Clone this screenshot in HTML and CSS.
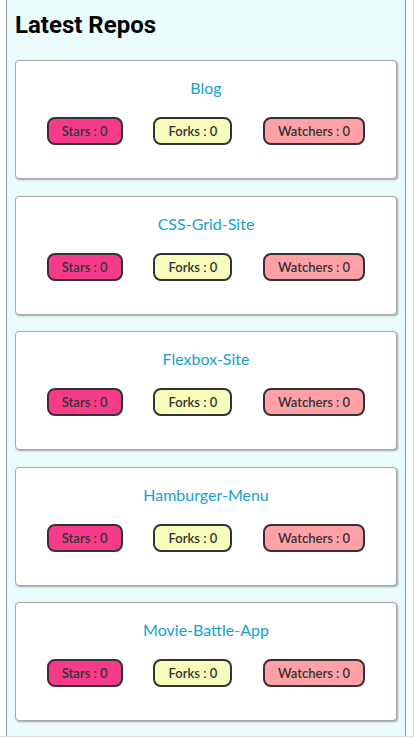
FILE: index.html
```html
<!DOCTYPE html>
<html>
<head>
<meta charset="utf-8">
<link rel="stylesheet" href="styles.css">
</head>
<body>
<div class="frame">
  <section class="repos">
    <h2 class="repos-title">Latest Repos</h2>
    <div class="card">
      <a class="card-name">Blog</a>
      <div class="stats">
        <span class="badge stars">Stars : 0</span>
        <span class="badge forks">Forks : 0</span>
        <span class="badge watchers">Watchers : 0</span>
      </div>
    </div>
    <div class="card">
      <a class="card-name">CSS-Grid-Site</a>
      <div class="stats">
        <span class="badge stars">Stars : 0</span>
        <span class="badge forks">Forks : 0</span>
        <span class="badge watchers">Watchers : 0</span>
      </div>
    </div>
    <div class="card">
      <a class="card-name">Flexbox-Site</a>
      <div class="stats">
        <span class="badge stars">Stars : 0</span>
        <span class="badge forks">Forks : 0</span>
        <span class="badge watchers">Watchers : 0</span>
      </div>
    </div>
    <div class="card">
      <a class="card-name">Hamburger-Menu</a>
      <div class="stats">
        <span class="badge stars">Stars : 0</span>
        <span class="badge forks">Forks : 0</span>
        <span class="badge watchers">Watchers : 0</span>
      </div>
    </div>
    <div class="card">
      <a class="card-name">Movie-Battle-App</a>
      <div class="stats">
        <span class="badge stars">Stars : 0</span>
        <span class="badge forks">Forks : 0</span>
        <span class="badge watchers">Watchers : 0</span>
      </div>
    </div>
  </section>
</div>
</body>
</html>
```
FILE: styles.css
```css
html, body {
  margin: 0;
  padding: 0;
  background: #ffffff;
}
.frame {
  width: 413px;
  height: 736px;
  border-right: 1px solid #dcdcdc;
  border-bottom: 1px solid #dcdcdc;
  overflow: hidden;
}
.repos {
  margin-left: 6px;
  width: 400px;
  background: #ebfcfd;
  border-left: 1px solid #9a9a9a;
  border-right: 1px solid #9a9a9a;
  padding: 9px 8px 16px 8px;
  box-sizing: border-box;
  min-height: 800px;
}
.repos-title {
  font-family: Roboto, "Liberation Sans", sans-serif;
  font-weight: 700;
  font-size: 24px;
  line-height: 32px;
  margin: 0 0 19px 0;
  color: #000;
}
.card {
  background: #fff;
  border: 1px solid #a8a8a8;
  border-radius: 4px;
  box-shadow: 1px 1px 2px rgba(0,0,0,0.35);
  height: 119px;
  box-sizing: border-box;
  margin-bottom: 16.5px;
  padding-top: 17px;
  display: flex;
  flex-direction: column;
  align-items: center;
}
.card-name {
  font-family: Lato, "Liberation Sans", sans-serif;
  font-size: 16px;
  line-height: 20px;
  color: #199fcf;
}
.stats {
  width: 100%;
  display: flex;
  justify-content: space-evenly;
  margin-top: 19px;
}
.badge {
  font-family: Lato, "Liberation Sans", sans-serif;
  font-weight: 600;
  font-size: 13px;
  white-space: nowrap;
  color: #333;
  height: 28px;
  box-sizing: border-box;
  border: 2px solid #333;
  border-radius: 8px;
  display: flex;
  align-items: center;
  justify-content: center;
  padding: 0 13px;
}
.stars { background: #f53b8a; }
.forks { background: #f8fdbc; }
.watchers { background: #ffa1a6; }
```
